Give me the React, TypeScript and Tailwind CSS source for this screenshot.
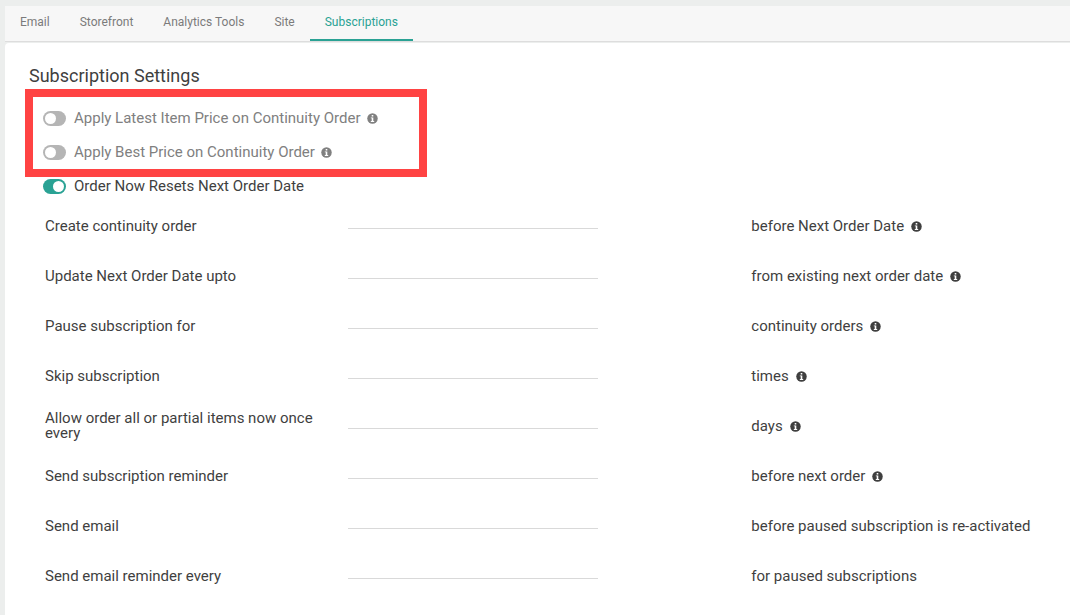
const tabs = ['Email', 'Storefront', 'Analytics Tools', 'Site', 'Subscriptions'];

const rows = [
  {id: 'create', label: 'Create continuity order', suffix: 'before Next Order Date', info: true},
  {id: 'update', label: 'Update Next Order Date upto', suffix: 'from existing next order date', info: true},
  {id: 'pause', label: 'Pause subscription for', suffix: 'continuity orders', info: true},
  {id: 'skip', label: 'Skip subscription', suffix: 'times', info: true},
  {id: 'allow', label: 'Allow order all or partial items now once every', suffix: 'days', info: true},
  {id: 'reminder', label: 'Send subscription reminder', suffix: 'before next order', info: true},
  {id: 'email', label: 'Send email', suffix: 'before paused subscription is re-activated', info: false},
  {id: 'repeat', label: 'Send email reminder every', suffix: 'for paused subscriptions', info: false},
];

function InfoIcon() {
  return (
    <svg viewBox="0 0 22 22" className="size-[11px] shrink-0" fill="currentColor" aria-hidden="true">
      <circle cx="11" cy="11" r="10.5" />
      <path fill="#fff" d="M9.4 4h3.2v2.8H9.4zM7.6 8.8h5v7.2h1.8v1.8H7.6V16h1.8v-5.4H7.6z" />
    </svg>
  );
}

type ToggleProps = {
  label: string;
  checked?: boolean;
  info?: boolean;
  className?: string;
};

function Toggle({label, checked, info, className}: ToggleProps) {
  return (
    <label className={`flex items-center ${className}`}>
      <input
        type="checkbox"
        defaultChecked={checked}
        className="mr-2 flex h-[15px] w-[23px] shrink-0 appearance-none items-center rounded-full bg-[#b5b5b5] px-[2px] before:size-[11px] before:rounded-full before:bg-white checked:justify-end checked:bg-[#2aa294]"
      />
      <span className="mr-[6px]">{label}</span>
      {info && <InfoIcon />}
    </label>
  );
}

export default function App() {
  return (
    <div className="min-h-screen bg-[#eceeed] pt-[6px] pl-[5px] font-['Roboto',sans-serif] text-[15px] leading-[15px] text-[#3f3f3f]">
      <nav className="flex h-9 border-b border-[#dddddd] bg-[#f7f7f7] text-xs text-[#7b7b7b]">
        {tabs.map((tab) => (
          <a
            key={tab}
            href="#"
            className={
              tab === 'Subscriptions'
                ? 'flex h-[35px] items-center border-b-2 border-[#2aa294] px-[15px] pb-[2px] text-[#2aa294]'
                : 'flex h-[35px] items-center border-b-2 border-transparent px-[15px] pb-[2px]'
            }
          >
            {tab}
          </a>
        ))}
      </nav>

      <main className="mt-px min-h-[calc(100vh-43px)] rounded-tl-sm bg-white pt-[21px] pr-4 pl-5">
        <h1 className="mb-px pl-1 text-lg leading-6">Subscription Settings</h1>

        <div className="max-w-[402px] border-8 border-[#ff4343] pt-1 pl-[10px] text-[#808080]">
          <Toggle label="Apply Latest Item Price on Continuity Order" info className="h-[34px]" />
          <Toggle label="Apply Best Price on Continuity Order" info className="h-[34px]" />
        </div>
        <Toggle label="Order Now Resets Next Order Date" checked className="ml-[18px] h-[18px]" />

        <div className="mt-[6px] pl-5">
          {rows.map((row) => (
            <div key={row.id} className="grid h-[50px] grid-cols-[3fr_4fr_3fr] items-center">
              <label htmlFor={row.id} className="pr-5">
                {row.label}
              </label>
              <input
                id={row.id}
                type="text"
                className="mt-2 h-5 w-[250px] self-start border-b border-[#d9d9d9] outline-none"
              />
              <div className="flex items-center gap-[7px] whitespace-nowrap">
                {row.suffix}
                {row.info && <InfoIcon />}
              </div>
            </div>
          ))}
        </div>
      </main>
    </div>
  );
}
